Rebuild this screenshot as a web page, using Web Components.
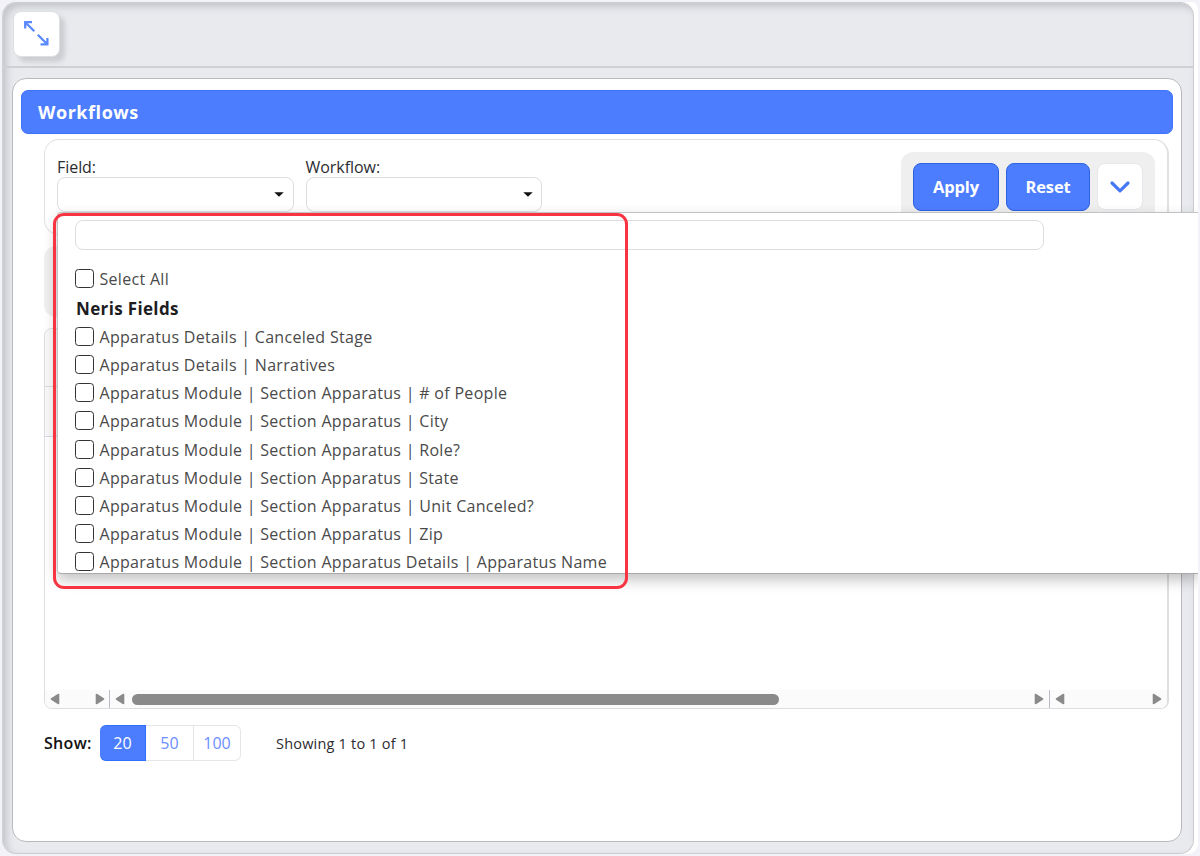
<!DOCTYPE html>
<html lang="en">
<head>
<meta charset="utf-8">
<title>Workflows</title>
<style>
    html, body { height: 100%; }
    body {
        margin: 0;
        overflow: hidden;
        background: #f3f2f8;
        font-family: "Open Sans", "Noto Sans", sans-serif;
        font-size: 16px;
        color: #2c2c30;
    }
</style>
</head>
<body>
<app-shell>
    <expand-button slot="toolbar"></expand-button>
    <panel-header>Workflows</panel-header>
    <filter-bar>
        <select-field label="Field:">
            <check-menu heading="Neris Fields"></check-menu>
        </select-field>
        <select-field label="Workflow:"></select-field>
        <action-button slot="actions">Apply</action-button>
        <action-button slot="actions" style="--w: 84px">Reset</action-button>
        <toggle-button slot="actions"></toggle-button>
    </filter-bar>
    <group-strip></group-strip>
    <data-grid></data-grid>
    <page-size sizes="20,50,100" current="20">Showing 1 to 1 of 1</page-size>
</app-shell>

<script>
class BaseElement extends HTMLElement {
    constructor() {
        super();
        this.attachShadow({ mode: 'open' });
    }

    connectedCallback() {
        this.shadowRoot.innerHTML = `<style>* { box-sizing: border-box; }</style>` + this.render();
    }
}

class AppShell extends BaseElement {
    render() {
        return `
            <style>
                :host {
                    display: block;
                    box-sizing: border-box;
                    width: 1198px;
                    height: 854px;
                    padding: 2px 3px 0 2px;
                    border-radius: 10px;
                    background: linear-gradient(#f3f2f8, #f3f2f8) 0 0 / 100% 2px no-repeat,
                        linear-gradient(90deg, #f3f2f8 50%, #fff 50%);
                }
                .frame {
                    display: flex;
                    flex-direction: column;
                    width: 1192px;
                    height: 852px;
                    border: 1px solid #cbcccf;
                    border-left-color: #d0d1d5;
                    border-radius: 14px;
                    background: #e9eaee;
                    box-shadow: inset 4px 4px 7px rgba(100, 105, 115, 0.28);
                }
                .toolbar {
                    height: 65px;
                    flex: none;
                    padding: 8px 0 0 10px;
                    border-bottom: 2px solid #cfd0d3;
                }
                .panel {
                    flex: 1;
                    margin: 10px 11px 11px 9px;
                    padding: 11px 8px 0;
                    border: 1px solid #b9babc;
                    border-radius: 14px;
                    background: #fff;
                    min-height: 0;
                }
            </style>
            <div class="frame">
                <div class="toolbar"><slot name="toolbar"></slot></div>
                <div class="panel"><slot></slot></div>
            </div>
        `;
    }
}

class ExpandButton extends BaseElement {
    render() {
        return `
            <style>
                :host { display: block; width: 47px; }
                button {
                    display: flex;
                    align-items: flex-start;
                    width: 47px;
                    height: 46px;
                    padding: 9px 0 0 10px;
                    border: 1px solid #dedfe1;
                    border-radius: 8px;
                    background: #fff;
                    box-shadow: 5px 5px 4px rgba(120, 122, 128, 0.25);
                }
            </style>
            <button aria-label="Expand">
                <svg width="25" height="25" viewBox="0 0 25 25" fill="none" stroke="#5b8aff" stroke-width="2.3">
                    <path d="M10.3 10.3L1 1M1.2 7.5V1.2H8M13.8 13.8L23.5 23.5M23.4 17V23.4H16.5"/>
                </svg>
            </button>
        `;
    }
}

class PanelHeader extends BaseElement {
    render() {
        return `
            <style>
                :host {
                    display: flex;
                    align-items: center;
                    box-sizing: border-box;
                    height: 44px;
                    padding: 0 0 1px 16px;
                    border: 1px solid #3f74fb;
                    border-radius: 7px;
                    background: #4d7dff;
                    color: #fff;
                    font-size: 18px;
                    font-weight: 700;
                    letter-spacing: 0.55px;
                }
            </style>
            <slot></slot>
        `;
    }
}

class FilterBar extends BaseElement {
    render() {
        return `
            <style>
                :host {
                    display: flex;
                    box-sizing: border-box;
                    height: 96px;
                    margin: 5px 4px 0 23px;
                    padding: 12px;
                    border: 1px solid #e0e1e3;
                    border-width: 1px 2px 1px 1px;
                    border-radius: 15px;
                    gap: 12px;
                }
                .actions {
                    display: flex;
                    align-items: flex-start;
                    gap: 7px;
                    height: 70px;
                    margin-left: auto;
                    padding: 11px 12px;
                    border-radius: 12px;
                    background: #efefef;
                }
            </style>
            <slot></slot>
            <div class="actions"><slot name="actions"></slot></div>
        `;
    }
}

class SelectField extends BaseElement {
    render() {
        return `
            <style>
                :host { display: block; position: relative; width: 236.5px; }
                label { display: block; height: 24.5px; line-height: 30px; letter-spacing: -0.05px; }
                .box {
                    display: flex;
                    align-items: center;
                    justify-content: flex-end;
                    height: 35px;
                    padding-right: 8.5px;
                    border: 1px solid #dcdddf;
                    border-radius: 8px;
                    background: #fff;
                }
            </style>
            <label>${this.getAttribute('label')}</label>
            <div class="box">
                <svg width="10" height="5" viewBox="0 0 10 5"><path d="M0.3 0.2H9.7L5 4.8Z" fill="#111"/></svg>
            </div>
            <slot></slot>
        `;
    }
}

class ActionButton extends BaseElement {
    render() {
        return `
            <style>
                :host { display: block; }
                button {
                    width: var(--w, 86px);
                    height: 48px;
                    padding: 0 0 2px;
                    border: 1px solid #2d62e0;
                    border-radius: 8px;
                    background: #4d7dff;
                    color: #fff;
                    font: 700 16.5px "Open Sans", sans-serif;
                    letter-spacing: -0.15px;
                }
            </style>
            <button><slot></slot></button>
        `;
    }
}

class ToggleButton extends BaseElement {
    render() {
        return `
            <style>
                :host {
                    display: flex;
                    align-items: center;
                    justify-content: center;
                    box-sizing: border-box;
                    width: 46px;
                    height: 47px;
                    border: 1px solid #e6e7ec;
                    border-radius: 8px;
                    background: #fff;
                }
            </style>
            <svg width="20" height="12" viewBox="0 0 20 12" fill="none" stroke="#4678f5" stroke-width="3.2" stroke-linecap="round" stroke-linejoin="round">
                <path d="M2 2L10 9.8L18 2"/>
            </svg>
        `;
    }
}

class CheckMenu extends BaseElement {
    render() {
        const module = 'Apparatus Module | Section Apparatus | ';
        const items = [
            'Apparatus Details | Canceled Stage',
            'Apparatus Details | Narratives',
            module + '# of People',
            module + 'City',
            module + 'Role?',
            module + 'State',
            module + 'Unit Canceled?',
            module + 'Zip',
            'Apparatus Module | Section Apparatus Details | Apparatus Name',
        ];
        return `
            <style>
                :host {
                    position: absolute;
                    top: 60px;
                    left: 0;
                    z-index: 2;
                    box-sizing: border-box;
                    width: 1141px;
                    height: 362px;
                    padding: 7px 0 0 17px;
                    border: 1px solid #c3c3c5;
                    border-right: none;
                    border-bottom-color: #aaa;
                    border-radius: 4px 0 0 4px;
                    background: #fff;
                    box-shadow: 0 6px 14px rgba(0, 0, 0, 0.24);
                    clip-path: inset(-15px 0 -30px -15px);
                }
                .search {
                    width: 969px;
                    height: 30px;
                    margin-bottom: 15px;
                    border: 1px solid #dcdddf;
                    border-radius: 8px;
                }
                .row {
                    display: flex;
                    align-items: center;
                    height: 28.1px;
                    gap: 6px;
                    color: #4a4a4a;
                    letter-spacing: 0.3px;
                    white-space: nowrap;
                }
                .heading { height: 30px; padding-left: 1px; color: #1d1d1f; font-size: 17px; font-weight: 700; letter-spacing: 0.35px; }
                .box { flex: none; width: 19px; height: 19px; margin: -1px 0 0 -0.5px; border: 1px solid #333; border-radius: 3.5px; }
                /* callout around the visible options */
                .callout {
                    position: absolute;
                    top: 0;
                    left: -5px;
                    width: 575px;
                    height: 376px;
                    border: 3px solid #f93442;
                    border-radius: 11px;
                }
            </style>
            <div class="search"></div>
            <div class="row"><span class="box"></span><span>Select All</span></div>
            <div class="row heading">${this.getAttribute('heading')}</div>
            ${items.map(item => `<div class="row"><span class="box"></span><span>${item}</span></div>`).join('')}
            <div class="callout"></div>
        `;
    }
}

class GroupStrip extends BaseElement {
    render() {
        return `
            <style>
                :host {
                    display: block;
                    height: 71px;
                    margin: 11px 4px 11px 23px;
                    border-radius: 12px;
                    background: #efefef;
                }
            </style>
        `;
    }
}

class DataGrid extends BaseElement {
    render() {
        const arrow = dir => `
            <svg class="${dir}" width="10" height="12" viewBox="0 0 10 12"><path d="M1.5 1.5V10.5L8.5 6Z" fill="#8a8a8a" stroke="#8a8a8a" stroke-width="1.6" stroke-linejoin="round"/></svg>
        `;
        return `
            <style>
                :host {
                    display: flex;
                    flex-direction: column;
                    box-sizing: border-box;
                    height: 381px;
                    margin: 0 4px 0 23px;
                    border: 1px solid #dcdee2;
                    border-right-width: 2px;
                    border-radius: 8px;
                    background: #fff;
                    overflow: hidden;
                }
                .head { height: 58px; border-bottom: 1px solid #d9dbdf; background: #f8f8f8; }
                .line { height: 50px; border-bottom: 1px solid #d3d8e6; background: #f8f8f8; }
                .body { flex: 1; }
                .bars { display: grid; grid-template-columns: 64px 940px 1fr; height: 18px; background: #fbfbfb; }
                .bar { display: flex; align-items: center; padding: 0 5px; gap: 7px; }
                .bar + .bar { border-left: 1px solid #babcc6; }
                .left { transform: scaleX(-1); }
                .right { margin-left: auto; }
                .bar:first-child .right { margin-right: -1px; }
                .thumb { width: 647px; height: 11px; border-radius: 6px; background: #8a8a8a; }
            </style>
            <div class="head"></div>
            <div class="line"></div>
            <div class="body"></div>
            <div class="bars">
                <div class="bar">${arrow('left')}${arrow('right')}</div>
                <div class="bar">${arrow('left')}<div class="thumb"></div>${arrow('right')}</div>
                <div class="bar">${arrow('left')}${arrow('right')}</div>
            </div>
        `;
    }
}

class PageSize extends BaseElement {
    render() {
        const sizes = this.getAttribute('sizes').split(',');
        const current = this.getAttribute('current');
        return `
            <style>
                :host { display: flex; align-items: center; height: 36px; margin: 16px 0 0 23px; }
                b { width: 56px; color: #111; font-size: 16px; font-weight: 600; letter-spacing: 0.3px; }
                .sizes { display: grid; grid-template-columns: 46px 48px 47px; height: 36px; }
                .size {
                    display: flex;
                    align-items: center;
                    justify-content: center;
                    border: 1px solid #e4e6ea;
                    border-left: none;
                    color: #6b8dff;
                }
                .size:first-child { border-radius: 6px 0 0 6px; }
                .size:last-child { border-radius: 0 6px 6px 0; }
                .size.active { border-color: #3070ff; background: #4d7dff; color: #fff; }
                .info { margin-left: 35px; font-size: 14.5px; letter-spacing: 0.2px; }
            </style>
            <b>Show:</b>
            <div class="sizes">
                ${sizes.map(s => `<div class="size ${s === current ? 'active' : ''}">${s}</div>`).join('')}
            </div>
            <span class="info"><slot></slot></span>
        `;
    }
}

customElements.define('app-shell', AppShell);
customElements.define('expand-button', ExpandButton);
customElements.define('panel-header', PanelHeader);
customElements.define('filter-bar', FilterBar);
customElements.define('select-field', SelectField);
customElements.define('action-button', ActionButton);
customElements.define('toggle-button', ToggleButton);
customElements.define('check-menu', CheckMenu);
customElements.define('group-strip', GroupStrip);
customElements.define('data-grid', DataGrid);
customElements.define('page-size', PageSize);
</script>
</body>
</html>
